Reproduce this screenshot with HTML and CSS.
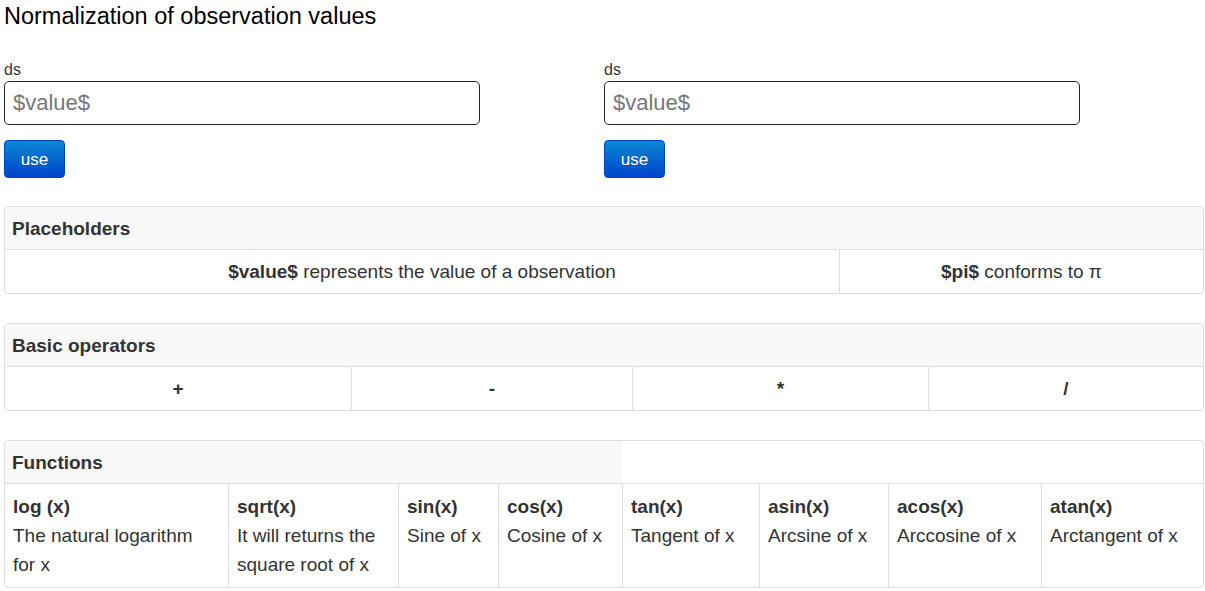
FILE: index.html
```html
<!DOCTYPE html>
<html>
<head>
<meta charset="utf-8">
<link rel="stylesheet" href="styles.css">
</head>
<body>
<div class="page">
  <h1 class="title">Normalization of observation values</h1>
  <div class="forms">
    <div class="form-col">
      <label class="label">ds</label>
      <input class="field" type="text" placeholder="$value$">
      <button class="btn">use</button>
    </div>
    <div class="form-col">
      <label class="label">ds</label>
      <input class="field" type="text" placeholder="$value$">
      <button class="btn">use</button>
    </div>
  </div>

  <div class="panel">
    <div class="panel-head">Placeholders</div>
    <div class="row row-ph">
      <div class="cell center"><b>$value$</b> represents the value of a observation</div>
      <div class="cell center"><b>$pi$</b> conforms to π</div>
    </div>
  </div>

  <div class="panel">
    <div class="panel-head">Basic operators</div>
    <div class="row row-op">
      <div class="cell center"><b>+</b></div>
      <div class="cell center"><b>-</b></div>
      <div class="cell center"><b>*</b></div>
      <div class="cell center"><b>/</b></div>
    </div>
  </div>

  <div class="panel">
    <div class="head-row">
      <div class="panel-head partial">Functions</div>
    </div>
    <div class="row row-fn">
      <div class="cell fn"><b>log (x)</b><br>The natural logarithm for x</div>
      <div class="cell fn"><b>sqrt(x)</b><br>It will returns the square root of x</div>
      <div class="cell fn"><b>sin(x)</b><br>Sine of x</div>
      <div class="cell fn"><b>cos(x)</b><br>Cosine of x</div>
      <div class="cell fn"><b>tan(x)</b><br>Tangent of x</div>
      <div class="cell fn"><b>asin(x)</b><br>Arcsine of x</div>
      <div class="cell fn"><b>acos(x)</b><br>Arccosine of x</div>
      <div class="cell fn"><b>atan(x)</b><br>Arctangent of x</div>
    </div>
  </div>
</div>
</body>
</html>
```

FILE: styles.css
```css
html, body {
  margin: 0;
  padding: 0;
  background: #fff;
}
body {
  font-family: "Liberation Sans", Arial, sans-serif;
  color: #333;
}
.page {
  width: 1200px;
  padding: 0 4px;
}
.title {
  margin: 0;
  padding-top: 2px;
  font-size: 23.5px;
  line-height: 28px;
  font-weight: normal;
  color: #000;
}
.forms {
  display: flex;
  margin-top: 30px;
}
.form-col {
  width: 600px;
  display: flex;
  flex-direction: column;
  align-items: flex-start;
}
.label {
  font-size: 16px;
  line-height: 20px;
  color: #333;
}
.field {
  margin-top: 1px;
  box-sizing: border-box;
  width: 476px;
  height: 44px;
  border: 1px solid #222;
  border-radius: 5px;
  padding: 0 8px;
  font-family: "Liberation Sans", Arial, sans-serif;
  font-size: 22px;
  color: #555;
  outline: none;
}
.field::placeholder {
  color: #777;
}
.btn {
  margin-top: 15px;
  box-sizing: border-box;
  width: 61px;
  height: 38px;
  border: 1px solid #0044cc;
  border-radius: 4px;
  background: linear-gradient(to bottom, #0a88d2, #0044cc);
  color: #fff;
  font-family: "Liberation Sans", Arial, sans-serif;
  font-size: 17px;
  padding: 2px 0 0;
}
.panel {
  margin-top: 28px;
  border: 1px solid #ddd;
  border-radius: 4px;
  overflow: hidden;
  font-size: 19px;
}
.panel + .panel {
  margin-top: 29px;
}
.panel-head {
  background: #f8f8f8;
  padding: 9px 7px 7px;
  line-height: 26px;
  font-weight: bold;
  border-bottom: 1px solid #ddd;
}
.head-row {
  border-bottom: 1px solid #ddd;
}
.panel-head.partial {
  width: 603px;
  border-bottom: none;
}
.row {
  display: grid;
}
.row-ph {
  grid-template-columns: 834px 1fr;
}
.row-op {
  grid-template-columns: 346px 281px 296px 1fr;
}
.row-fn {
  grid-template-columns: 223px 170px 100px 124px 137px 129px 153px 1fr;
}
.cell {
  padding: 8px;
  line-height: 27px;
}
.cell + .cell {
  border-left: 1px solid #ddd;
}
.center {
  text-align: center;
}
.fn {
  line-height: 29px;
  padding: 8px 12px 8px 8px;
}
```
